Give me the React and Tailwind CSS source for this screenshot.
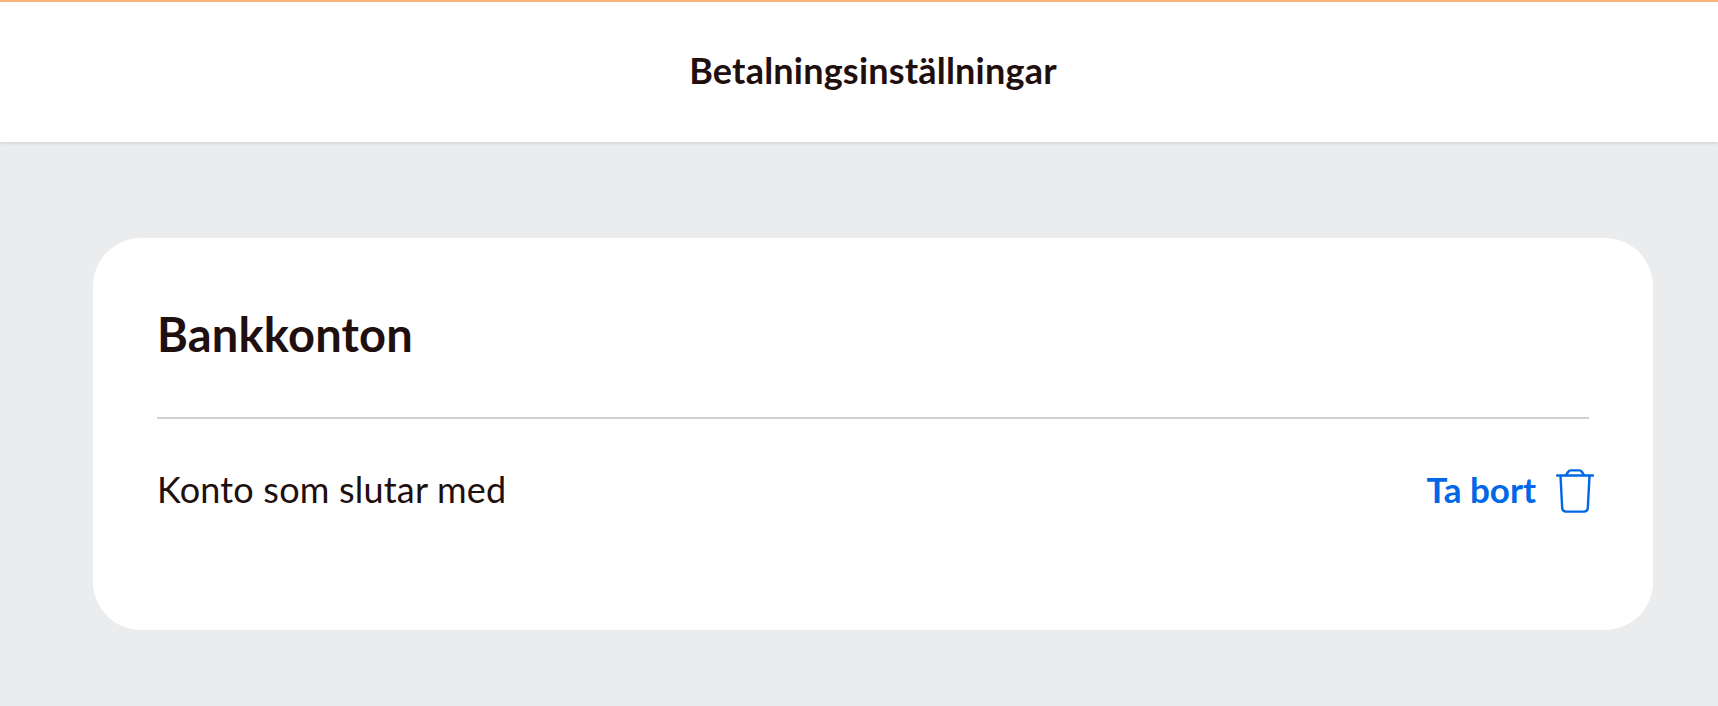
import React from "react";

const TrashIcon = () => (
  <svg width="38" height="44" viewBox="0 0 38 44" fill="none" stroke="#0067e6" strokeWidth="2.4" strokeLinecap="round" strokeLinejoin="round">
    <path d="M1 6.5h36" />
    <path d="M10 6.2 L12 3 Q13 1.4 15 1.4 H23 Q25 1.4 26 3 L28 6.2" />
    <path d="M4.5 7 L6.2 39 Q6.4 42.6 10 42.6 H28 Q31.6 42.6 31.8 39 L33.5 7" />
  </svg>
);

const App = () => {
  return (
    <div className="h-[706px] overflow-hidden bg-[#ebecee] font-['Lato',sans-serif] text-[#1f0f0f]">
      <header className="flex h-[142px] items-center justify-center border-t-2 border-[#ffb27a] bg-white pb-1 pl-7 shadow-[0_1px_4px_rgba(0,0,0,0.12)]">
        <h1 className="text-[36px] font-bold tracking-[0.2px]">Betalningsinställningar</h1>
      </header>
      <main className="px-[93px] pt-[96px]">
        <section className="flex h-[392px] w-[1560px] flex-col rounded-[48px] bg-white px-16">
          <h2 className="flex h-[181px] items-center border-b-2 border-[#cdd1d4] pt-[14px] text-[47px] font-bold tracking-[0.2px]">Bankkonton</h2>
          <div className="flex h-[144px] items-center justify-between">
            <span className="pb-1 text-[36px] tracking-[0.2px]">Konto som slutar med</span>
            <button className="-mr-[5px] flex items-center gap-5 text-[35px] font-bold text-[#0067e6]">
              <span className="pb-1">Ta bort</span>
              <TrashIcon />
            </button>
          </div>
        </section>
      </main>
    </div>
  );
};

export default App;
